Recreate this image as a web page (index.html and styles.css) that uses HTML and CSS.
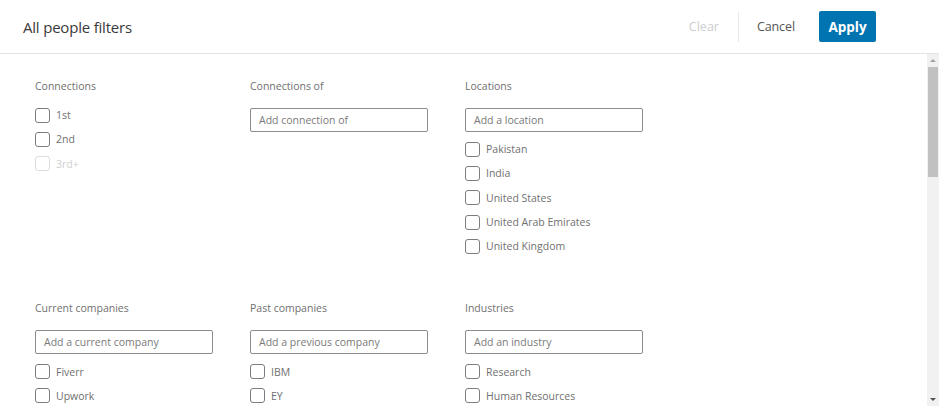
FILE: index.html
```html
<!DOCTYPE html>
<html lang="en">
<head>
<meta charset="utf-8">
<title>All people filters</title>
<link rel="stylesheet" href="styles.css">
</head>
<body>
<div class="modal">
  <header class="head">
    <h1 class="title">All people filters</h1>
    <div class="actions">
      <button class="btn btn-clear" disabled>Clear</button>
      <span class="divider"></span>
      <button class="btn btn-cancel">Cancel</button>
      <button class="btn btn-apply">Apply</button>
    </div>
  </header>
  <div class="body">
    <main class="grid">
      <section class="filter">
        <h2 class="filter-title">Connections</h2>
        <ul class="options options-only">
          <li class="opt"><span class="box"></span>1st</li>
          <li class="opt"><span class="box"></span>2nd</li>
          <li class="opt opt-disabled"><span class="box"></span>3rd+</li>
        </ul>
      </section>
      <section class="filter">
        <h2 class="filter-title">Connections of</h2>
        <div class="field">Add connection of</div>
      </section>
      <section class="filter">
        <h2 class="filter-title">Locations</h2>
        <div class="field">Add a location</div>
        <ul class="options">
          <li class="opt"><span class="box"></span>Pakistan</li>
          <li class="opt"><span class="box"></span>India</li>
          <li class="opt"><span class="box"></span>United States</li>
          <li class="opt"><span class="box"></span>United Arab Emirates</li>
          <li class="opt"><span class="box"></span>United Kingdom</li>
        </ul>
      </section>
      <section class="filter">
        <h2 class="filter-title">Current companies</h2>
        <div class="field">Add a current company</div>
        <ul class="options">
          <li class="opt"><span class="box"></span>Fiverr</li>
          <li class="opt"><span class="box"></span>Upwork</li>
        </ul>
      </section>
      <section class="filter">
        <h2 class="filter-title">Past companies</h2>
        <div class="field">Add a previous company</div>
        <ul class="options">
          <li class="opt"><span class="box"></span>IBM</li>
          <li class="opt"><span class="box"></span>EY</li>
        </ul>
      </section>
      <section class="filter">
        <h2 class="filter-title">Industries</h2>
        <div class="field">Add an industry</div>
        <ul class="options">
          <li class="opt"><span class="box"></span>Research</li>
          <li class="opt"><span class="box"></span>Human Resources</li>
        </ul>
      </section>
    </main>
    <div class="scrollbar">
      <span class="arrow arrow-up"></span>
      <span class="thumb"></span>
      <span class="track-fill"></span>
      <span class="arrow arrow-down"></span>
    </div>
  </div>
</div>
</body>
</html>
```

FILE: styles.css
```css
* { box-sizing: border-box; }
html, body {
  margin: 0;
  padding: 0;
  background: #fff;
  overflow: hidden;
}
body {
  font-family: "Open Sans", "Noto Sans", "Liberation Sans", sans-serif;
  width: 939px;
  height: 406px;
}
.modal {
  display: flex;
  flex-direction: column;
  height: 406px;
}
.head {
  height: 54px;
  flex: none;
  display: flex;
  align-items: center;
  padding-left: 23px;
  border-bottom: 1px solid #e3e3e3;
}
.title {
  margin: 0;
  font-size: 15px;
  font-weight: 400;
  color: #3a3a3a;
  flex: 1;
  letter-spacing: -0.2px;
}
.actions {
  display: flex;
  align-items: center;
  margin-right: 63px;
  height: 30px;
}
.btn {
  font-family: inherit;
  border: 0;
  background: none;
  padding: 0;
  font-size: 12.5px;
  cursor: pointer;
}
.btn-clear {
  color: #cdcdcd;
  font-weight: 400;
}
.divider {
  width: 1px;
  height: 30px;
  background: #e8e8e8;
  margin: 0 18px 0 19px;
}
.btn-cancel {
  color: #555;
  font-weight: 400;
  margin-right: 24px;
  letter-spacing: -0.1px;
}
.btn-apply {
  background: #0073b1;
  color: #fff;
  font-weight: 700;
  height: 31px;
  width: 57px;
  border-radius: 2px;
  font-size: 13.5px;
}
.body {
  flex: 1;
  display: flex;
  min-height: 0;
}
.grid {
  flex: 1;
  overflow: hidden;
  display: grid;
  grid-template-columns: repeat(3, 215px);
  grid-auto-rows: max-content;
  row-gap: 42px;
  padding: 24px 0 0 35px;
}
.filter-title {
  margin: 0 0 14px;
  font-size: 10.5px;
  line-height: 16px;
  font-weight: 400;
  color: #707070;
}
.field {
  width: 178px;
  height: 24px;
  border: 1px solid #8c8c8c;
  border-radius: 2px;
  padding: 0 8px;
  font-size: 10.5px;
  line-height: 22px;
  color: #7a7a7a;
}
.options {
  list-style: none;
  margin: 5px 0 0;
  padding: 0;
}
.options-only {
  margin-top: -5px;
}
.opt {
  display: flex;
  align-items: center;
  height: 24.3px;
  font-size: 10.5px;
  color: #707070;
}
.box {
  width: 15px;
  height: 15px;
  border: 1px solid #7d7d7d;
  border-radius: 3px;
  margin-right: 6px;
  flex: none;
}
.opt-disabled {
  color: #d0d0d0;
}
.opt-disabled .box {
  border-color: #dcdcdc;
}
.scrollbar {
  width: 12px;
  flex: none;
  background: #f1f1f1;
  display: flex;
  flex-direction: column;
  align-items: center;
}
.arrow {
  width: 0;
  height: 0;
  border-left: 3px solid transparent;
  border-right: 3px solid transparent;
  flex: none;
}
.arrow-up {
  border-bottom: 3px solid #a3a3a3;
  margin: 5px 0 5px;
}
.thumb {
  width: 10px;
  height: 110px;
  background: #c1c1c1;
  flex: none;
}
.track-fill {
  flex: 1;
}
.arrow-down {
  border-top: 3px solid #505050;
  margin: 0 0 5px;
}
```
